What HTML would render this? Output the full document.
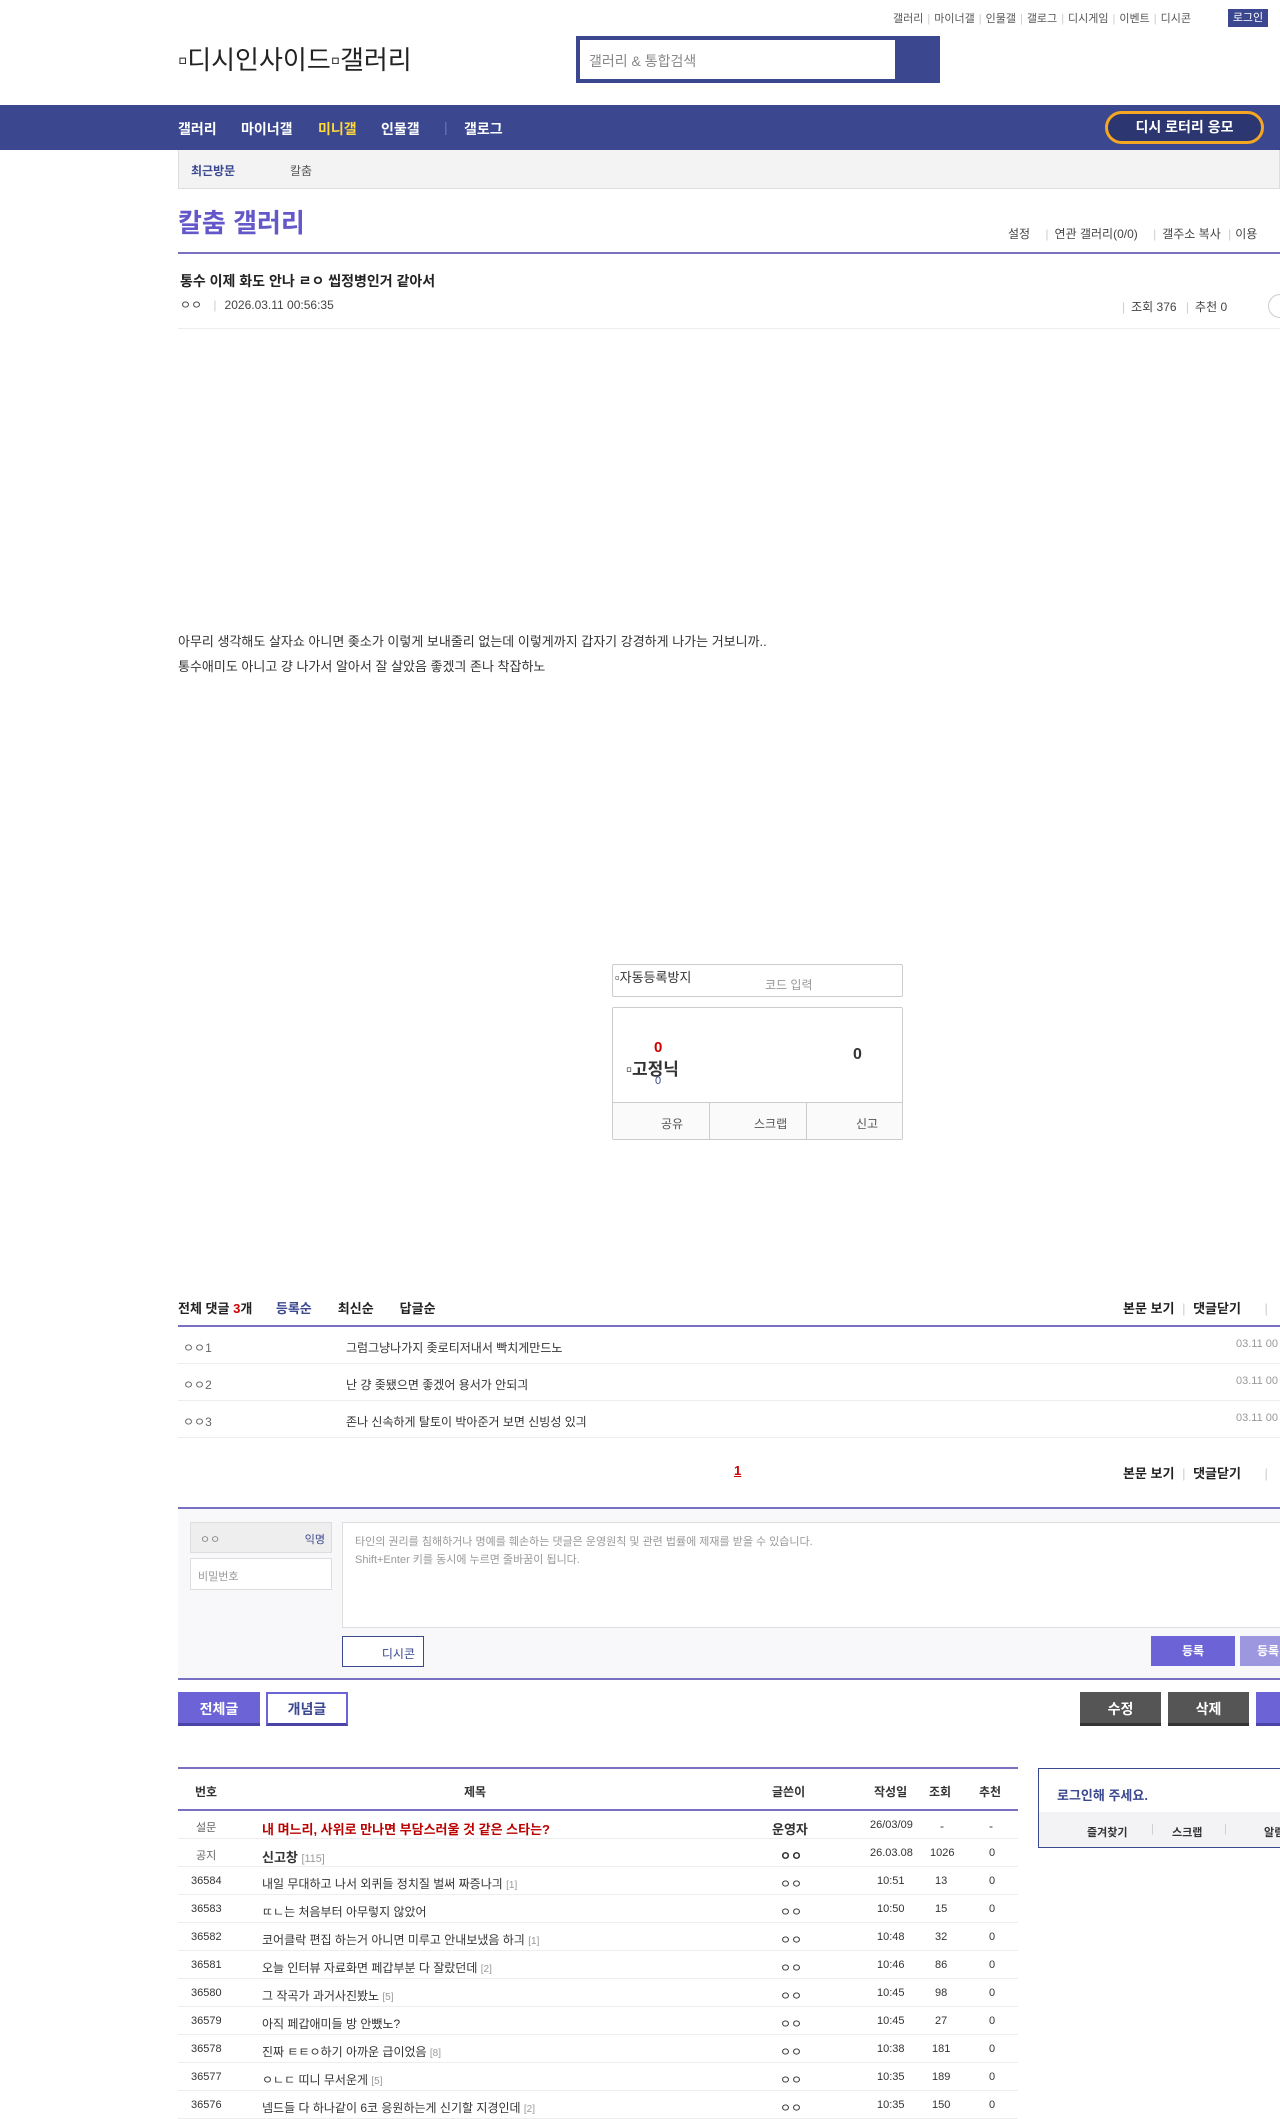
<!DOCTYPE html>
<html><head><meta charset="utf-8"><style>
*{margin:0;padding:0;box-sizing:border-box}
body{width:1280px;height:2108px;overflow:hidden;background:#fff;font-family:"Liberation Sans","Noto Sans CJK KR",sans-serif;color:#333;position:relative;font-size:13px}
.a{position:absolute;white-space:nowrap}
.top{top:10px;font-size:11px;color:#555}
.top span{color:#ccc;margin:0 4px}
.nav{top:105px;left:0;width:1280px;height:45px;background:#3b4890}
.nav b{position:absolute;top:14px;color:#fff;font-size:14px}
.sub{top:150px;left:178px;width:1102px;height:39px;background:#f3f3f3;border:1px solid #ddd;border-top:none}
.hl{height:1px;background:#eee;left:178px;width:1102px}
.row{position:absolute;left:178px;width:840px;height:28px;border-bottom:1px solid #eee;font-size:12px}
.row span{position:absolute;top:8px}
.btn{position:absolute;color:#fff;font-size:14px;font-weight:bold;text-align:center}
</style></head><body>
<div class="a top" style="left:893px">갤러리<span>|</span>마이너갤<span>|</span>인물갤<span>|</span>갤로그<span>|</span>디시게임<span>|</span>이벤트<span>|</span>디시콘</div>
<div class="a" style="left:1228px;top:9px;width:40px;height:18px;background:#3b4890;color:#fff;font-size:11px;text-align:center;line-height:18px">로그인</div>
<div class="a" style="left:178px;top:40px;font-size:26px;color:#222">▫디시인사이드▫갤러리</div>
<div class="a" style="left:576px;top:36px;width:364px;height:47px;background:#3b4890"></div>
<div class="a" style="left:580px;top:40px;width:315px;height:39px;background:#fff;font-size:14px;color:#888;padding:11px 9px">갤러리 &amp; 통합검색</div>
<div class="a nav">
<b style="left:178px">갤러리</b><b style="left:241px">마이너갤</b><b style="left:318px;color:#ffd83a">미니갤</b><b style="left:381px">인물갤</b><b style="left:444px;top:14px;color:#6a77b5;font-weight:normal">|</b><b style="left:464px">갤로그</b>
<div class="a" style="left:1105px;top:6px;width:159px;height:33px;border:3px solid #f5a623;border-radius:17px;background:#2c3670;color:#fff;font-size:14px;font-weight:bold;text-align:center;line-height:27px">디시 로터리 응모</div>
</div>
<div class="a sub"><span class="a" style="left:12px;top:12px;font-size:12px;color:#3b4890;font-weight:bold">최근방문</span><span class="a" style="left:111px;top:12px;font-size:12px;color:#555">칼춤</span></div>
<div class="a" style="left:178px;top:203px;font-size:26px;color:#6357c9;font-weight:bold">칼춤 갤러리</div>
<div class="a" style="left:1008px;top:225px;font-size:12px;color:#444">설정 <span style="color:#ccc;margin:0 6px 0 12px">|</span>연관 갤러리(0/0) <span style="color:#ccc;margin:0 6px 0 12px">|</span>갤주소 복사 <span style="color:#ccc;margin:0 4px">|</span>이용</div>
<div class="a" style="left:178px;top:252px;width:1102px;height:2px;background:#7a70c2"></div>
<div class="a" style="left:180px;top:271px;font-size:14px;font-weight:bold;color:#222">통수 이제 화도 안나 ㄹㅇ 씹정병인거 같아서</div>
<div class="a" style="left:180px;top:296px;font-size:12px;color:#444">ㅇㅇ <span style="color:#ccc;margin:0 8px">|</span>2026.03.11 00:56:35</div>
<div class="a" style="left:1122px;top:298px;font-size:12px;color:#444"><span style="color:#ccc;margin-right:6px">|</span>조회 376 <span style="color:#ccc;margin:0 6px">|</span>추천 0</div>
<div class="a" style="left:1268px;top:294px;width:24px;height:24px;border:1px solid #ccc;border-radius:12px"></div>
<div class="a hl" style="top:328px"></div>
<div class="a" style="left:178px;top:629px;font-size:13px;line-height:25px;color:#333">아무리 생각해도 살자쇼 아니면 좆소가 이렇게 보내줄리 없는데 이렇게까지 갑자기 강경하게 나가는 거보니까..<br>통수애미도 아니고 걍 나가서 알아서 잘 살았음 좋겠긔 존나 착잡하노</div>
<div class="a" style="left:612px;top:964px;width:291px;height:33px;border:1px solid #ccc;border-radius:2px"><span class="a" style="left:2px;top:2px;font-size:13px;color:#333">▫자동등록방지</span><span class="a" style="left:152px;top:11px;font-size:12px;color:#999">코드 입력</span></div>
<div class="a" style="left:612px;top:1007px;width:291px;height:133px;border:1px solid #ccc;border-radius:2px">
<span class="a" style="left:41px;top:31px;color:#c00;font-weight:bold;font-size:15px">0</span>
<span class="a" style="left:13px;top:47px;font-size:17px;font-weight:bold;color:#333">▫고정닉</span>
<span class="a" style="left:42px;top:67px;font-size:11px;color:#3b4890">0</span>
<span class="a" style="left:240px;top:38px;font-size:16px;font-weight:bold">0</span>
<div class="a" style="left:0;top:94px;width:289px;height:37px;border-top:1px solid #ccc;background:#fafafa;font-size:12px;color:#555">
<span class="a" style="left:48px;top:12px">공유</span><span class="a" style="left:96px;top:0;height:37px;border-left:1px solid #ccc"></span><span class="a" style="left:141px;top:12px">스크랩</span><span class="a" style="left:193px;top:0;height:37px;border-left:1px solid #ccc"></span><span class="a" style="left:243px;top:12px">신고</span></div></div>
<div class="a" style="left:178px;top:1298px;font-size:13px;font-weight:bold;color:#222">전체 댓글 <span style="color:#c00">3</span>개 <span style="color:#3b4890;margin-left:20px">등록순</span><span style="margin-left:26px">최신순</span><span style="margin-left:26px">답글순</span></div>
<div class="a" style="left:1123px;top:1298px;font-size:13px;font-weight:bold;color:#222">본문 보기 <span style="color:#ccc;font-weight:normal;margin:0 4px">|</span> 댓글닫기 <span style="color:#ccc;font-weight:normal;margin-left:20px">|</span></div>
<div class="a" style="left:178px;top:1325px;width:1102px;height:2px;background:#7a70c2"></div>
<div class="a" style="left:178px;top:1327px;width:1102px;height:110px;font-size:12px;color:#333">
<div class="a" style="top:0;left:0;width:1102px;height:37px;border-bottom:1px solid #eee"><span class="a" style="left:5px;top:12px;color:#666">ㅇㅇ1</span><span class="a" style="left:168px;top:12px">그럼그냥나가지 좆로티저내서 빡치게만드노</span><span class="a" style="left:1058px;top:11px;color:#999;font-size:11px">03.11 00</span></div>
<div class="a" style="top:37px;left:0;width:1102px;height:37px;border-bottom:1px solid #eee"><span class="a" style="left:5px;top:12px;color:#666">ㅇㅇ2</span><span class="a" style="left:168px;top:12px">난 걍 좆됐으면 좋겠어 용서가 안되긔</span><span class="a" style="left:1058px;top:11px;color:#999;font-size:11px">03.11 00</span></div>
<div class="a" style="top:74px;left:0;width:1102px;height:37px;border-bottom:1px solid #eee"><span class="a" style="left:5px;top:12px;color:#666">ㅇㅇ3</span><span class="a" style="left:168px;top:12px">존나 신속하게 탈토이 박아준거 보면 신빙성 있긔</span><span class="a" style="left:1058px;top:11px;color:#999;font-size:11px">03.11 00</span></div></div>
<div class="a" style="left:734px;top:1463px;font-size:13px;font-weight:bold;color:#c00;text-decoration:underline">1</div>
<div class="a" style="left:1123px;top:1463px;font-size:13px;font-weight:bold;color:#222">본문 보기 <span style="color:#ccc;font-weight:normal;margin:0 4px">|</span> 댓글닫기 <span style="color:#ccc;font-weight:normal;margin-left:20px">|</span></div>
<div class="a" style="left:178px;top:1507px;width:1102px;height:2px;background:#7a70c2"></div>
<div class="a" style="left:178px;top:1509px;width:1102px;height:170px;background:#f8f8fa"></div>
<div class="a" style="left:178px;top:1678px;width:1102px;height:2px;background:#7a70c2"></div>
<div class="a" style="left:190px;top:1522px;width:142px;height:31px;border:1px solid #ddd;background:#eee;font-size:11px"><span class="a" style="left:9px;top:8px;color:#888">ㅇㅇ</span><span class="a" style="right:6px;top:8px;color:#3b4890">익명</span></div>
<div class="a" style="left:190px;top:1558px;width:142px;height:32px;border:1px solid #ddd;background:#fff;font-size:11px;color:#999;padding:9px 7px">비밀번호</div>
<div class="a" style="left:342px;top:1522px;width:950px;height:106px;border:1px solid #ddd;background:#fff;font-size:11px;color:#999;line-height:18px;padding:10px 12px">타인의 권리를 침해하거나 명예를 훼손하는 댓글은 운영원칙 및 관련 법률에 제재를 받을 수 있습니다.<br>Shift+Enter 키를 동시에 누르면 줄바꿈이 됩니다.</div>
<div class="a" style="left:342px;top:1636px;width:82px;height:31px;border:1px solid #3b4890;background:#fff;font-size:12px;color:#3b4890;text-align:right;padding:8px 8px">디시콘</div>
<div class="btn" style="left:1151px;top:1636px;width:84px;height:30px;background:#6b63d6;font-size:12px;line-height:30px">등록</div>
<div class="btn" style="left:1240px;top:1636px;width:60px;height:30px;background:#9d97e0;font-size:12px;line-height:30px;text-align:left;padding-left:17px">등록</div>
<div class="btn" style="left:178px;top:1692px;width:82px;height:34px;background:#6b63d6;line-height:34px;border-bottom:3px solid #4b44a8">전체글</div>
<div class="btn" style="left:266px;top:1692px;width:82px;height:34px;background:#fff;color:#3b4890;border:2px solid #6b63d6;border-bottom:3px solid #4b44a8;line-height:30px">개념글</div>
<div class="btn" style="left:1080px;top:1692px;width:81px;height:34px;background:#555;line-height:34px;border-bottom:3px solid #333">수정</div>
<div class="btn" style="left:1168px;top:1692px;width:81px;height:34px;background:#555;line-height:34px;border-bottom:3px solid #333">삭제</div>
<div class="btn" style="left:1256px;top:1692px;width:40px;height:34px;background:#6b63d6;border-bottom:3px solid #4b44a8"></div>
<div class="a" style="left:178px;top:1767px;width:840px;height:2px;background:#7a70c2"></div>
<div class="a" style="left:178px;top:1769px;width:840px;height:42px;border-bottom:2px solid #7a70c2;font-size:12px;font-weight:bold;color:#333">
<span class="a" style="left:17px;top:14px">번호</span><span class="a" style="left:286px;top:14px">제목</span><span class="a" style="left:594px;top:14px">글쓴이</span><span class="a" style="left:696px;top:14px">작성일</span><span class="a" style="left:751px;top:14px">조회</span><span class="a" style="left:801px;top:14px">추천</span></div>
<div class="row" style="top:1811px"><span style="left:18px;font-size:11px;color:#666">설문</span><span style="left:84px;color:#b00;font-weight:bold;font-size:13px">내 며느리, 사위로 만나면 부담스러울 것 같은 스타는?</span><span style="left:594px;font-weight:bold;font-size:13px">운영자</span><span style="left:692px;font-size:11px">26/03/09</span><span style="left:762px">-</span><span style="left:811px">-</span></div>
<div class="row" style="top:1839px"><span style="left:18px;font-size:11px;color:#666">공지</span><span style="left:84px;font-weight:bold;font-size:13px">신고창 <small style="font-weight:normal;color:#999">[115]</small></span><span style="left:602px;font-weight:bold">ㅇㅇ</span><span style="left:692px;font-size:11px">26.03.08</span><span style="left:752px;font-size:11px">1026</span><span style="left:811px;font-size:11px">0</span></div>
<div class="row" style="top:1867px"><span style="left:13px;font-size:11px">36584</span><span style="left:84px">내일 무대하고 나서 외퀴들 정치질 벌써 짜증나긔 <small style="color:#999">[1]</small></span><span style="left:602px">ㅇㅇ</span><span style="left:699px;font-size:11px">10:51</span><span style="left:757px;font-size:11px">13</span><span style="left:811px;font-size:11px">0</span></div>
<div class="row" style="top:1895px"><span style="left:13px;font-size:11px">36583</span><span style="left:84px">ㄸㄴ는 처음부터 아무렇지 않았어</span><span style="left:602px">ㅇㅇ</span><span style="left:699px;font-size:11px">10:50</span><span style="left:757px;font-size:11px">15</span><span style="left:811px;font-size:11px">0</span></div>
<div class="row" style="top:1923px"><span style="left:13px;font-size:11px">36582</span><span style="left:84px">코어클락 편집 하는거 아니면 미루고 안내보냈음 하긔 <small style="color:#999">[1]</small></span><span style="left:602px">ㅇㅇ</span><span style="left:699px;font-size:11px">10:48</span><span style="left:757px;font-size:11px">32</span><span style="left:811px;font-size:11px">0</span></div>
<div class="row" style="top:1951px"><span style="left:13px;font-size:11px">36581</span><span style="left:84px">오늘 인터뷰 자료화면 페갑부분 다 잘랐던데 <small style="color:#999">[2]</small></span><span style="left:602px">ㅇㅇ</span><span style="left:699px;font-size:11px">10:46</span><span style="left:757px;font-size:11px">86</span><span style="left:811px;font-size:11px">0</span></div>
<div class="row" style="top:1979px"><span style="left:13px;font-size:11px">36580</span><span style="left:84px">그 작곡가 과거사진봤노 <small style="color:#999">[5]</small></span><span style="left:602px">ㅇㅇ</span><span style="left:699px;font-size:11px">10:45</span><span style="left:757px;font-size:11px">98</span><span style="left:811px;font-size:11px">0</span></div>
<div class="row" style="top:2007px"><span style="left:13px;font-size:11px">36579</span><span style="left:84px">아직 페갑애미들 방 안뺐노?</span><span style="left:602px">ㅇㅇ</span><span style="left:699px;font-size:11px">10:45</span><span style="left:757px;font-size:11px">27</span><span style="left:811px;font-size:11px">0</span></div>
<div class="row" style="top:2035px"><span style="left:13px;font-size:11px">36578</span><span style="left:84px">진짜 ㅌㅌㅇ하기 아까운 급이었음 <small style="color:#999">[8]</small></span><span style="left:602px">ㅇㅇ</span><span style="left:699px;font-size:11px">10:38</span><span style="left:754px;font-size:11px">181</span><span style="left:811px;font-size:11px">0</span></div>
<div class="row" style="top:2063px"><span style="left:13px;font-size:11px">36577</span><span style="left:84px">ㅇㄴㄷ 띠니 무서운게 <small style="color:#999">[5]</small></span><span style="left:602px">ㅇㅇ</span><span style="left:699px;font-size:11px">10:35</span><span style="left:754px;font-size:11px">189</span><span style="left:811px;font-size:11px">0</span></div>
<div class="row" style="top:2091px"><span style="left:13px;font-size:11px">36576</span><span style="left:84px">넴드들 다 하나같이 6코 응원하는게 신기할 지경인데 <small style="color:#999">[2]</small></span><span style="left:602px">ㅇㅇ</span><span style="left:699px;font-size:11px">10:35</span><span style="left:754px;font-size:11px">150</span><span style="left:811px;font-size:11px">0</span></div>
<div class="a" style="left:1038px;top:1768px;width:260px;height:80px;border:1px solid #3b4890;background:#fff">
<span class="a" style="left:18px;top:16px;font-size:13px;font-weight:bold;color:#3b4890">로그인해 주세요.</span>
<div class="a" style="left:0;top:43px;width:258px;height:35px;background:#f3f3f5;font-size:11px;font-weight:bold;color:#333"><span class="a" style="left:48px;top:12px">즐겨찾기</span><span class="a" style="left:112px;top:11px;color:#ccc;font-weight:normal">|</span><span class="a" style="left:133px;top:12px">스크랩</span><span class="a" style="left:185px;top:11px;color:#ccc;font-weight:normal">|</span><span class="a" style="left:225px;top:12px">알림</span></div></div>
</body></html>
